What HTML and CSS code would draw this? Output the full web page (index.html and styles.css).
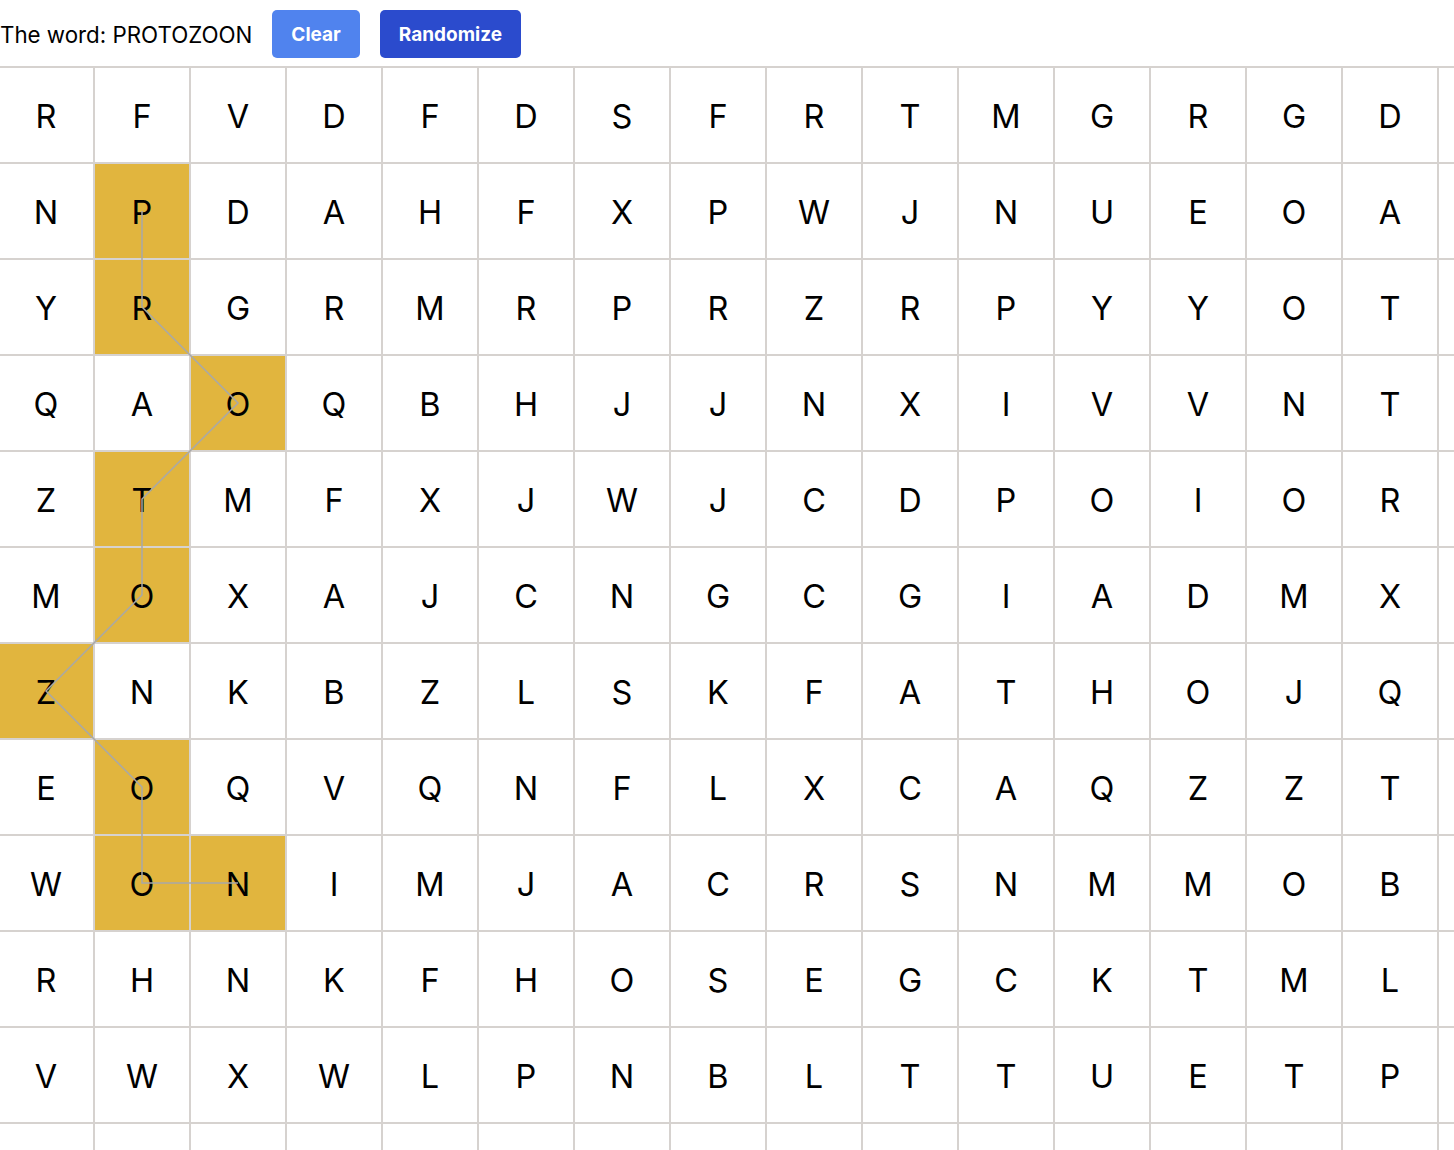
FILE: index.html
```html
<!DOCTYPE html>
<html lang="en">
<head>
<meta charset="utf-8">
<title>Word Search</title>
<link rel="stylesheet" href="styles.css">
</head>
<body>
<div class="header">
  <span class="title">The word: PROTOZOON</span>
  <button class="btn btn-clear">Clear</button>
  <button class="btn btn-random">Randomize</button>
</div>
<div class="viewport">
<div class="board">
  <div class="cell">R</div><div class="cell">F</div><div class="cell">V</div><div class="cell">D</div><div class="cell">F</div><div class="cell">D</div><div class="cell">S</div><div class="cell">F</div><div class="cell">R</div><div class="cell">T</div><div class="cell">M</div><div class="cell">G</div><div class="cell">R</div><div class="cell">G</div><div class="cell">D</div><div class="cell"></div>
  <div class="cell">N</div><div class="cell on">P</div><div class="cell">D</div><div class="cell">A</div><div class="cell">H</div><div class="cell">F</div><div class="cell">X</div><div class="cell">P</div><div class="cell">W</div><div class="cell">J</div><div class="cell">N</div><div class="cell">U</div><div class="cell">E</div><div class="cell">O</div><div class="cell">A</div><div class="cell"></div>
  <div class="cell">Y</div><div class="cell on">R</div><div class="cell">G</div><div class="cell">R</div><div class="cell">M</div><div class="cell">R</div><div class="cell">P</div><div class="cell">R</div><div class="cell">Z</div><div class="cell">R</div><div class="cell">P</div><div class="cell">Y</div><div class="cell">Y</div><div class="cell">O</div><div class="cell">T</div><div class="cell"></div>
  <div class="cell">Q</div><div class="cell">A</div><div class="cell on">O</div><div class="cell">Q</div><div class="cell">B</div><div class="cell">H</div><div class="cell">J</div><div class="cell">J</div><div class="cell">N</div><div class="cell">X</div><div class="cell">I</div><div class="cell">V</div><div class="cell">V</div><div class="cell">N</div><div class="cell">T</div><div class="cell"></div>
  <div class="cell">Z</div><div class="cell on">T</div><div class="cell">M</div><div class="cell">F</div><div class="cell">X</div><div class="cell">J</div><div class="cell">W</div><div class="cell">J</div><div class="cell">C</div><div class="cell">D</div><div class="cell">P</div><div class="cell">O</div><div class="cell">I</div><div class="cell">O</div><div class="cell">R</div><div class="cell"></div>
  <div class="cell">M</div><div class="cell on">O</div><div class="cell">X</div><div class="cell">A</div><div class="cell">J</div><div class="cell">C</div><div class="cell">N</div><div class="cell">G</div><div class="cell">C</div><div class="cell">G</div><div class="cell">I</div><div class="cell">A</div><div class="cell">D</div><div class="cell">M</div><div class="cell">X</div><div class="cell"></div>
  <div class="cell on">Z</div><div class="cell">N</div><div class="cell">K</div><div class="cell">B</div><div class="cell">Z</div><div class="cell">L</div><div class="cell">S</div><div class="cell">K</div><div class="cell">F</div><div class="cell">A</div><div class="cell">T</div><div class="cell">H</div><div class="cell">O</div><div class="cell">J</div><div class="cell">Q</div><div class="cell"></div>
  <div class="cell">E</div><div class="cell on">O</div><div class="cell">Q</div><div class="cell">V</div><div class="cell">Q</div><div class="cell">N</div><div class="cell">F</div><div class="cell">L</div><div class="cell">X</div><div class="cell">C</div><div class="cell">A</div><div class="cell">Q</div><div class="cell">Z</div><div class="cell">Z</div><div class="cell">T</div><div class="cell"></div>
  <div class="cell">W</div><div class="cell on">O</div><div class="cell on">N</div><div class="cell">I</div><div class="cell">M</div><div class="cell">J</div><div class="cell">A</div><div class="cell">C</div><div class="cell">R</div><div class="cell">S</div><div class="cell">N</div><div class="cell">M</div><div class="cell">M</div><div class="cell">O</div><div class="cell">B</div><div class="cell"></div>
  <div class="cell">R</div><div class="cell">H</div><div class="cell">N</div><div class="cell">K</div><div class="cell">F</div><div class="cell">H</div><div class="cell">O</div><div class="cell">S</div><div class="cell">E</div><div class="cell">G</div><div class="cell">C</div><div class="cell">K</div><div class="cell">T</div><div class="cell">M</div><div class="cell">L</div><div class="cell"></div>
  <div class="cell">V</div><div class="cell">W</div><div class="cell">X</div><div class="cell">W</div><div class="cell">L</div><div class="cell">P</div><div class="cell">N</div><div class="cell">B</div><div class="cell">L</div><div class="cell">T</div><div class="cell">T</div><div class="cell">U</div><div class="cell">E</div><div class="cell">T</div><div class="cell">P</div><div class="cell"></div>
  <div class="cell"></div><div class="cell"></div><div class="cell"></div><div class="cell"></div><div class="cell"></div><div class="cell"></div><div class="cell"></div><div class="cell"></div><div class="cell"></div><div class="cell"></div><div class="cell"></div><div class="cell"></div><div class="cell"></div><div class="cell"></div><div class="cell"></div><div class="cell"></div>
  <svg class="path" width="1536" height="1152" viewBox="0 0 1536 1152">
    <polyline points="143,143 143,239 239,335 143,431 143,527 47,623 143,719 143,815 239,815" fill="none" stroke="#a8a8a8" stroke-width="1.5"/>
  </svg>
</div>
</div>
</body>
</html>
```

FILE: styles.css
```css
html, body {
  margin: 0;
  padding: 0;
  background: #ffffff;
  overflow: hidden;
}

body {
  font-family: Inter, "Liberation Sans", sans-serif;
  color: #000;
}

.header {
  display: flex;
  align-items: center;
  gap: 20px;
  height: 64px;
  padding-top: 2px;
}

.title {
  font-size: 22.3px;
}

.btn {
  height: 48px;
  border: none;
  border-radius: 5px;
  color: #fff;
  font-family: Inter, "Liberation Sans", sans-serif;
  font-weight: 700;
  font-size: 19px;
  padding: 0 19px;
}

.btn-clear {
  background: #5083ee;
}

.btn-random {
  background: #2b4bcd;
}

.viewport {
  overflow: hidden;
  height: 1084px;
}

.board {
  position: relative;
  margin-left: -1px;
  width: 1536px;
  display: grid;
  grid-template-columns: repeat(16, 96px);
  grid-auto-rows: 96px;
  border-top: 2px solid #d6d2cf;
}

.cell {
  box-sizing: border-box;
  border-right: 2px solid #d6d2cf;
  border-bottom: 2px solid #d6d2cf;
  display: flex;
  align-items: center;
  justify-content: center;
  font-size: 32.5px;
  line-height: 1;
  padding-top: 5px;
}

.cell.on {
  background: #e1b53e;
}

.path {
  position: absolute;
  top: 0;
  left: 0;
  pointer-events: none;
}
```
